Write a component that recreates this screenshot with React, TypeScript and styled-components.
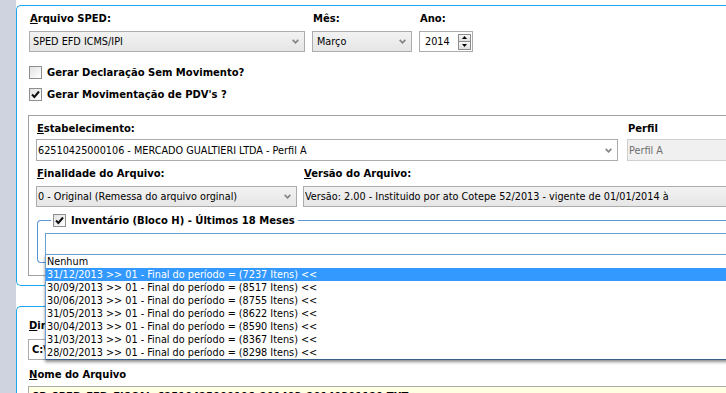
import React from "react";
import styled, { createGlobalStyle } from "styled-components";

const GlobalStyle = createGlobalStyle`
  html, body {
    margin: 0;
    padding: 0;
    background: #fff;
  }
  body {
    font-family: "DejaVu Sans", Tahoma, sans-serif;
    font-size: 9.7px;
    color: #000;
    overflow: hidden;
  }
`;

const Screen = styled.div`
  display: flex;
  width: 726px;
  height: 393px;
  overflow: hidden;
`;

const SideStrip = styled.div`
  flex: 0 0 16px;
  background: #cfd3df;
`;

const Content = styled.div`
  flex: 1;
  min-width: 0;
  display: flex;
  flex-direction: column;
  padding-top: 5px;
`;

const Panel = styled.section<{ $closed?: boolean; $pad: string; $top?: number }>`
  flex: none;
  border: 1px solid #1da5ee;
  border-right: none;
  border-bottom: ${(p) => (p.$closed ? "1px solid #1da5ee" : "none")};
  border-radius: ${(p) => (p.$closed ? "5px 0 0 5px" : "5px 0 0 0")};
  margin-right: -12px;
  margin-top: ${(p) => p.$top ?? 0}px;
  padding: ${(p) => p.$pad};
`;

const Row = styled.div<{ $gap: number; $top?: number }>`
  display: flex;
  gap: ${(p) => p.$gap}px;
  margin-top: ${(p) => p.$top ?? 0}px;
`;

const Field = styled.div<{ $w?: number; $gap: number; $top?: number }>`
  display: flex;
  flex-direction: column;
  gap: ${(p) => p.$gap}px;
  margin-top: ${(p) => p.$top ?? 0}px;
  ${(p) => (p.$w ? `flex: 0 0 ${p.$w}px;` : "flex: 1; min-width: 0;")}
`;

const Label = styled.div`
  font-weight: bold;
  font-size: 10px;
  line-height: 13px;
  height: 13px;
  padding-left: 1px;
  white-space: nowrap;
`;

type Tone = "gray" | "white" | "disabled";

const SelectBox = styled.div<{ $tone: Tone; $pad?: number; $h?: number }>`
  box-sizing: border-box;
  height: ${(p) => p.$h ?? 21}px;
  display: flex;
  align-items: center;
  padding: 0 5px 0 ${(p) => p.$pad ?? 1}px;
  border: 1px solid ${(p) => (p.$tone === "disabled" ? "#cfcfcf" : "#acacac")};
  background: ${(p) =>
    p.$tone === "gray"
      ? "linear-gradient(#f2f2f2, #e6e6e6)"
      : p.$tone === "disabled"
      ? "#f0f0f0"
      : "#fff"};
  color: ${(p) => (p.$tone === "disabled" ? "#6d6d6d" : "#000")};
  white-space: nowrap;
  overflow: hidden;
`;

const SelectText = styled.span`
  flex: 1;
  min-width: 0;
  overflow: hidden;
`;

const Chevron = () => (
  <svg width="7" height="5" viewBox="0 0 7 5">
    <polyline points="0.7,0.8 3.5,3.8 6.3,0.8" fill="none" stroke="#858585" strokeWidth="1.7" />
  </svg>
);

const SpinBox = styled.div`
  box-sizing: border-box;
  height: 21px;
  display: flex;
  align-items: center;
  padding: 0 1px 0 5px;
  border: 1px solid #acacac;
  background: #fff;
`;

const SpinButtons = styled.div`
  display: flex;
  flex-direction: column;
  width: 13px;
  height: 16px;
  border: 1px solid #8c8c8c;
  box-sizing: border-box;
`;

const SpinHalf = styled.div<{ $down?: boolean }>`
  flex: 1;
  display: flex;
  align-items: center;
  justify-content: center;
  background: linear-gradient(#f7f7f7, #dedede);
  border-top: ${(p) => (p.$down ? "1px solid #8c8c8c" : "none")};
`;

const CheckRow = styled.div<{ $top: number }>`
  display: flex;
  align-items: center;
  gap: 5px;
  height: 13px;
  margin-top: ${(p) => p.$top}px;
  font-weight: bold;
  font-size: 10px;
  white-space: nowrap;
`;

const Box = styled.span`
  flex: none;
  box-sizing: border-box;
  width: 13px;
  height: 13px;
  border: 1px solid #8e8f8f;
  background: linear-gradient(135deg, #e2e2e2, #ffffff);
  display: inline-flex;
  align-items: center;
  justify-content: center;
`;

const CheckBox = ({ checked }: { checked?: boolean }) => (
  <Box>
    {checked && (
      <svg width="9" height="9" viewBox="0 0 9 9">
        <polyline points="1,4.5 3.4,7 8,1.5" fill="none" stroke="#111" strokeWidth="2" />
      </svg>
    )}
  </Box>
);

const GrayGroup = styled.div`
  margin: 14px -12px 0 -1px;
  border: 1px solid #a0a0a0;
  border-right: none;
  padding: 6px 0 12px 7px;
`;

const Group = styled.fieldset`
  margin: 7px 0 0 1px;
  padding: 0 0 7px 7px;
  border: 1px solid #5897d6;
  border-right: none;
  border-radius: 4px 0 0 4px;
  min-width: 0;
`;

const Legend = styled.legend`
  display: flex;
  align-items: center;
  gap: 5px;
  height: 13px;
  margin-left: 6px;
  padding: 0 3px 0 2px;
  font-weight: bold;
  font-size: 10px;
  white-space: nowrap;
`;

const Combo = styled.div`
  position: relative;
  margin-top: 6px;
  margin-right: -12px;
`;

const ComboEdit = styled.div`
  box-sizing: border-box;
  height: 22px;
  border: 1px solid #6a9fd4;
  background: #fff;
`;

const DropList = styled.ul`
  position: absolute;
  left: 0;
  right: -20px;
  top: calc(100% - 1px);
  margin: 0;
  padding: 0;
  list-style: none;
  background: #fff;
  border: 1px solid #6a9fd4;
  border-bottom-color: #3a5f8a;
  box-shadow: 0 2px 3px rgba(0, 0, 0, 0.45);
  z-index: 10;
`;

const DropItem = styled.li<{ $active?: boolean }>`
  height: 13px;
  line-height: 13px;
  padding-left: 1px;
  white-space: nowrap;
  background: ${(p) => (p.$active ? "#3399ff" : "transparent")};
  color: ${(p) => (p.$active ? "#fff" : "#000")};
`;

const TextBox = styled.div<{ $yellow?: boolean }>`
  box-sizing: border-box;
  height: 21px;
  display: flex;
  align-items: center;
  padding-left: 3px;
  margin-right: -12px;
  border: 1px solid #acacac;
  background: ${(p) => (p.$yellow ? "#ffffe1" : "#fff")};
  font-weight: bold;
  font-size: 10px;
  white-space: nowrap;
  overflow: hidden;
`;

const inventario = [
  "31/12/2013 >> 01 - Final do período = (7237 Itens) <<",
  "30/09/2013 >> 01 - Final do período = (8517 Itens) <<",
  "30/06/2013 >> 01 - Final do período = (8755 Itens) <<",
  "31/05/2013 >> 01 - Final do período = (8622 Itens) <<",
  "30/04/2013 >> 01 - Final do período = (8590 Itens) <<",
  "31/03/2013 >> 01 - Final do período = (8367 Itens) <<",
  "28/02/2013 >> 01 - Final do período = (8298 Itens) <<",
];

const App: React.FC = () => {
  return (
    <>
      <GlobalStyle />
      <Screen>
        <SideStrip />
        <Content>
          <Panel $closed $pad="6px 0 9px 12px">
            <Row $gap={7}>
              <Field $w={276} $gap={6}>
                <Label>
                  <u>A</u>rquivo SPED:
                </Label>
                <SelectBox $tone="gray" $pad={3}>
                  <SelectText>SPED EFD ICMS/IPI</SelectText>
                  <Chevron />
                </SelectBox>
              </Field>
              <Field $w={100} $gap={6}>
                <Label>Mês:</Label>
                <SelectBox $tone="gray" $pad={4}>
                  <SelectText>Março</SelectText>
                  <Chevron />
                </SelectBox>
              </Field>
              <Field $w={54} $gap={6}>
                <Label>Ano:</Label>
                <SpinBox>
                  <SelectText>2014</SelectText>
                  <SpinButtons>
                    <SpinHalf>
                      <svg width="5" height="3" viewBox="0 0 5 3">
                        <polygon points="0,3 2.5,0 5,3" fill="#000" />
                      </svg>
                    </SpinHalf>
                    <SpinHalf $down>
                      <svg width="5" height="3" viewBox="0 0 5 3">
                        <polygon points="0,0 2.5,3 5,0" fill="#000" />
                      </svg>
                    </SpinHalf>
                  </SpinButtons>
                </SpinBox>
              </Field>
            </Row>

            <CheckRow $top={14}>
              <CheckBox />
              Gerar Declaração Sem Movimento?
            </CheckRow>
            <CheckRow $top={9}>
              <CheckBox checked />
              Gerar Movimentação de PDV's ?
            </CheckRow>

            <GrayGroup>
              <Row $gap={9}>
                <Field $w={582} $gap={4}>
                  <Label>
                    <u>E</u>stabelecimento:
                  </Label>
                  <SelectBox $tone="white" $pad={1} $h={22}>
                    <SelectText>62510425000106 - MERCADO GUALTIERI LTDA - Perfil A</SelectText>
                    <Chevron />
                  </SelectBox>
                </Field>
                <Field $gap={4}>
                  <Label>Perfil</Label>
                  <SelectBox $tone="disabled" $pad={1} $h={22}>
                    <SelectText>Perfil A</SelectText>
                  </SelectBox>
                </Field>
              </Row>
              <Row $gap={6} $top={6}>
                <Field $w={261} $gap={6}>
                  <Label>
                    <u>F</u>inalidade do Arquivo:
                  </Label>
                  <SelectBox $tone="gray" $pad={1}>
                    <SelectText>0 - Original (Remessa do arquivo orginal)</SelectText>
                    <Chevron />
                  </SelectBox>
                </Field>
                <Field $gap={6}>
                  <Label>
                    <u>V</u>ersão do Arquivo:
                  </Label>
                  <SelectBox $tone="gray" $pad={1}>
                    <SelectText>
                      Versão: 2.00 - Instituido por ato Cotepe 52/2013 - vigente de 01/01/2014 à
                    </SelectText>
                  </SelectBox>
                </Field>
              </Row>

              <Group>
                <Legend>
                  <CheckBox checked />
                  Inventário (Bloco H) - Últimos 18 Meses
                </Legend>
                <Combo>
                  <ComboEdit />
                  <DropList>
                    <DropItem>Nenhum</DropItem>
                    {inventario.map((item, i) => (
                      <DropItem key={item} $active={i === 0}>
                        {item}
                      </DropItem>
                    ))}
                  </DropList>
                </Combo>
              </Group>
            </GrayGroup>
          </Panel>

          <Panel $pad="12px 0 0 11px" $top={20}>
            <Field $gap={7}>
              <Label>
                <u>D</u>iretório do Arquivo:
              </Label>
              <TextBox>C:\SPED\</TextBox>
            </Field>
            <Field $gap={5} $top={8}>
              <Label>
                <u>N</u>ome do Arquivo
              </Label>
              <TextBox $yellow>SP_SPED_EFD_FISCAL_62510425000106_201403_20140301120.TXT</TextBox>
            </Field>
          </Panel>
        </Content>
      </Screen>
    </>
  );
};

export default App;
